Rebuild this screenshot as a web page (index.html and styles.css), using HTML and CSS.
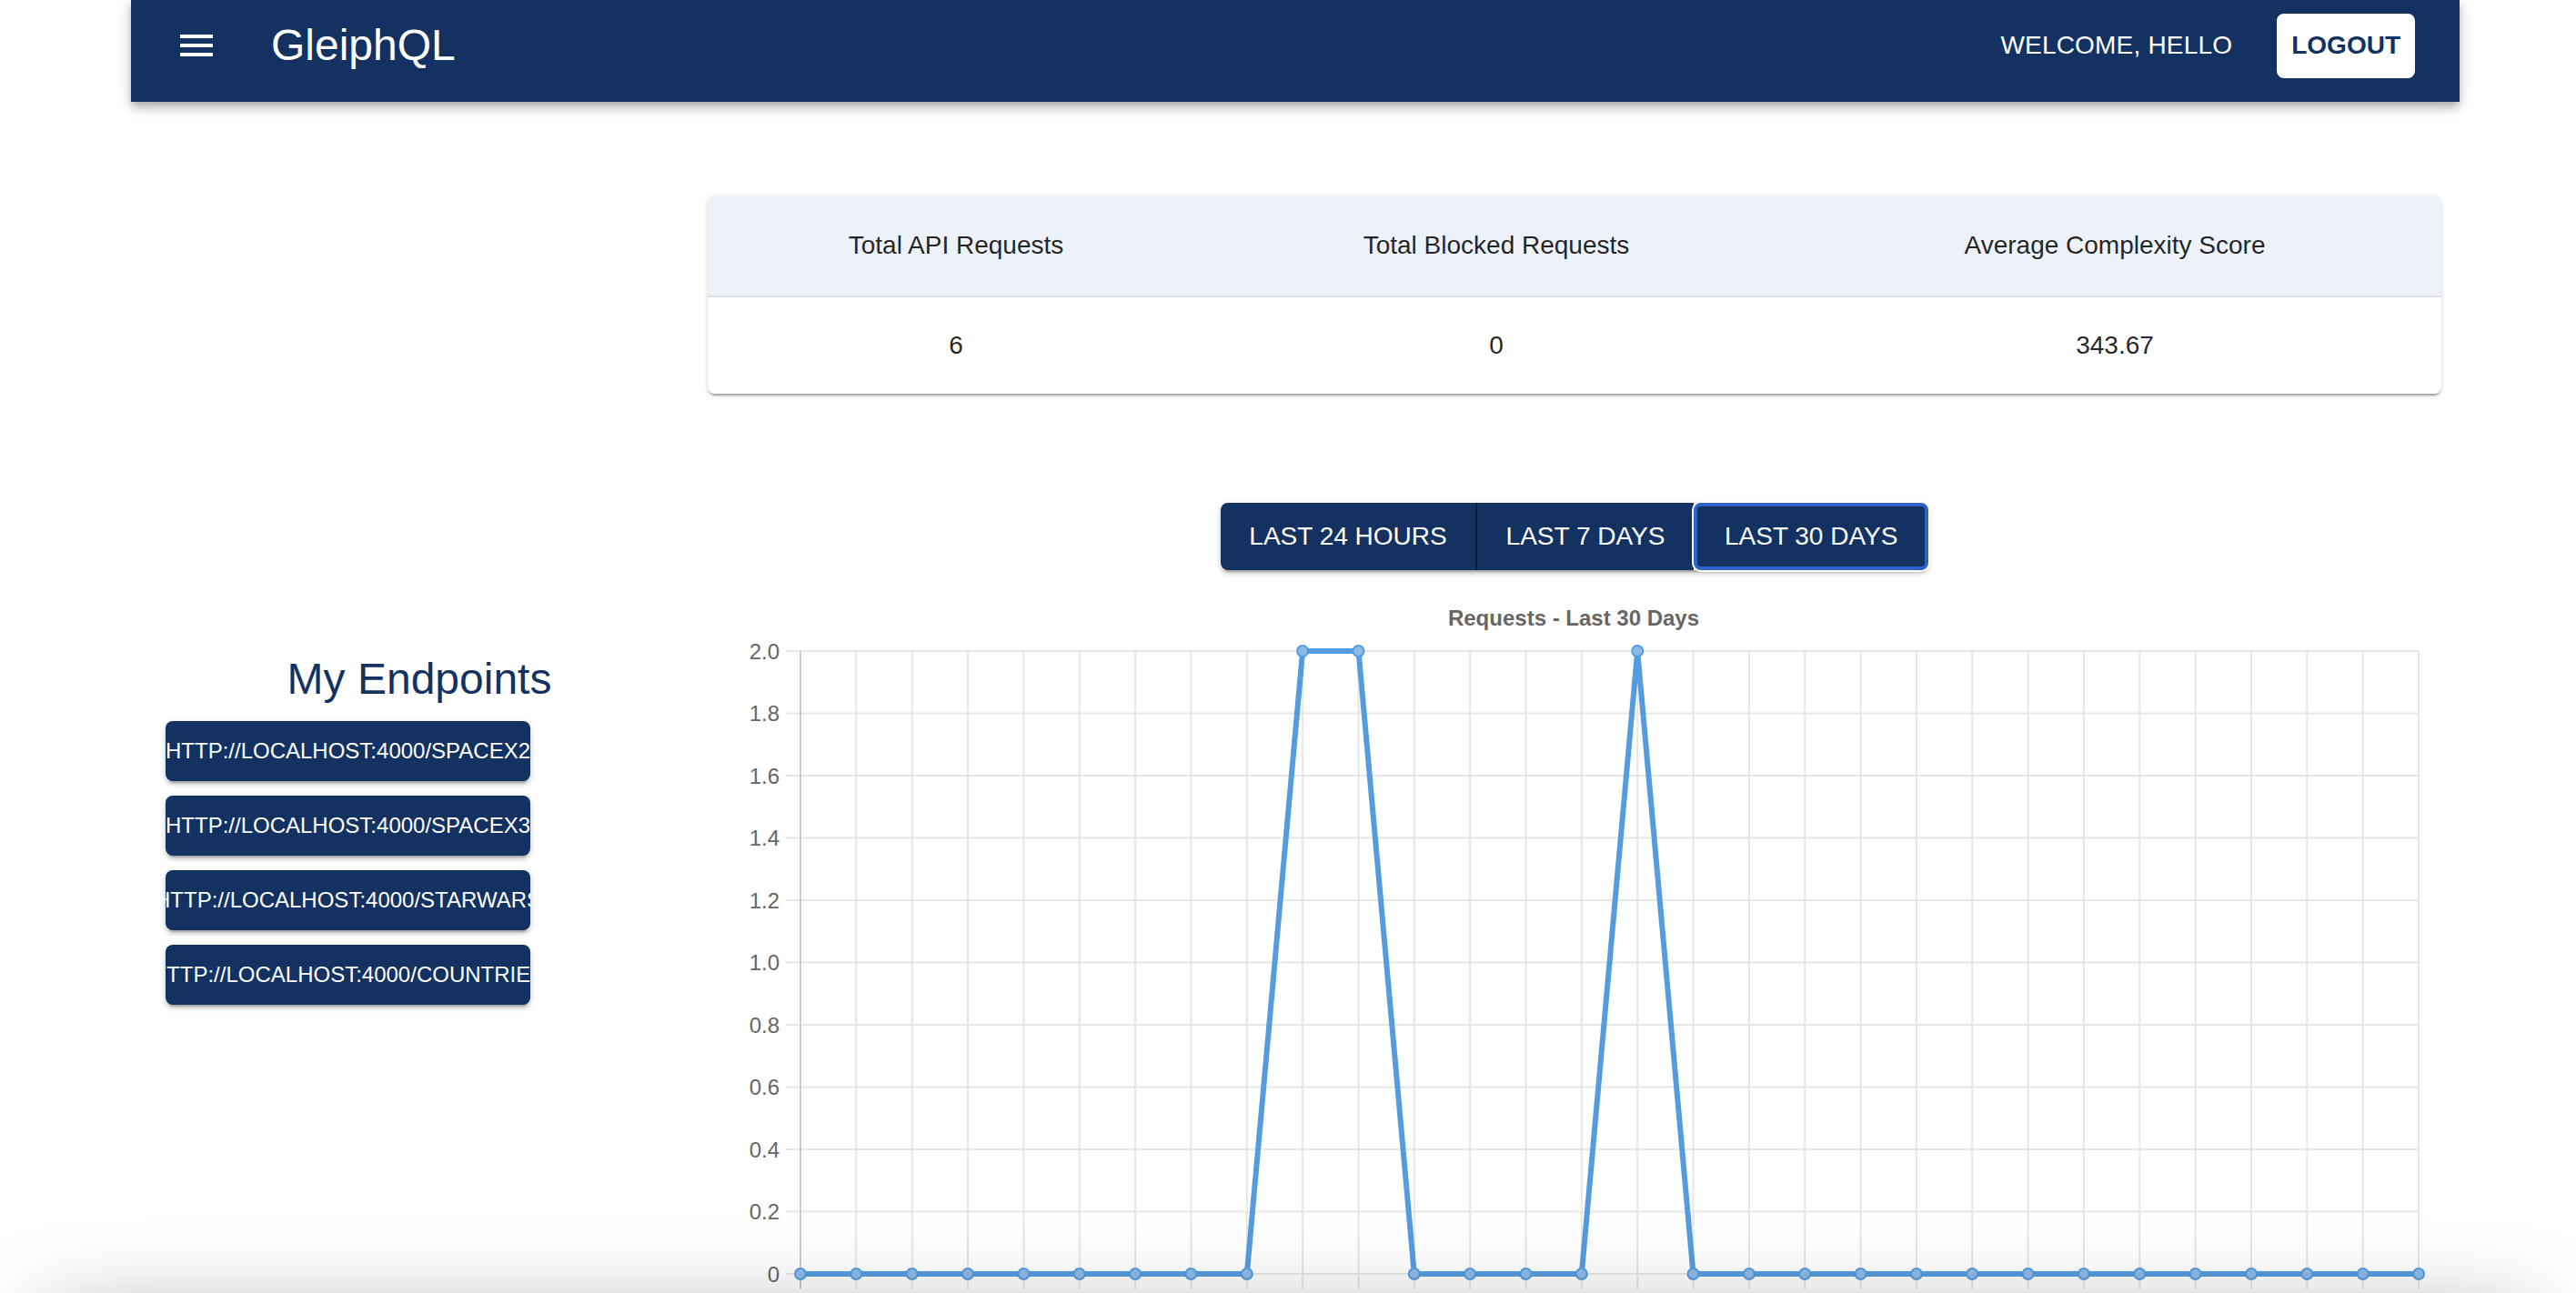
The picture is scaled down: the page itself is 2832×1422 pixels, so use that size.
FILE: index.html
```html
<!DOCTYPE html>
<html lang="en">
<head>
<meta charset="utf-8">
<title>GleiphQL</title>
<link rel="stylesheet" href="styles.css">
</head>
<body>
<div class="page">
  <header class="appbar">
    <svg class="menu-icon" width="36" height="24" viewBox="0 0 36 24" aria-hidden="true">
      <rect x="0" y="0" width="36" height="4"/>
      <rect x="0" y="10" width="36" height="4"/>
      <rect x="0" y="20" width="36" height="4"/>
    </svg>
    <div class="brand">GleiphQL</div>
    <div class="spacer"></div>
    <div class="welcome">WELCOME, HELLO</div>
    <button class="logout">LOGOUT</button>
  </header>

  <div class="main">
    <aside class="sidebar">
      <h2 class="endpoints-title">My Endpoints</h2>
      <div class="endpoint-list">
        <button class="endpoint"><span>HTTP://LOCALHOST:4000/SPACEX2</span></button>
        <button class="endpoint"><span>HTTP://LOCALHOST:4000/SPACEX3</span></button>
        <button class="endpoint"><span>HTTP://LOCALHOST:4000/STARWARS</span></button>
        <button class="endpoint"><span>HTTP://LOCALHOST:4000/COUNTRIES</span></button>
      </div>
    </aside>

    <section class="content">
      <table class="stats">
        <colgroup>
          <col class="col-a"><col class="col-b"><col class="col-c">
        </colgroup>
        <thead>
          <tr>
            <th>Total API Requests</th>
            <th>Total Blocked Requests</th>
            <th>Average Complexity Score</th>
          </tr>
        </thead>
        <tbody>
          <tr>
            <td>6</td>
            <td>0</td>
            <td>343.67</td>
          </tr>
        </tbody>
      </table>

      <div class="range-row">
        <div class="range-group">
          <button class="range-btn range-first">LAST 24 HOURS</button>
          <button class="range-btn">LAST 7 DAYS</button>
          <button class="range-btn range-selected">LAST 30 DAYS</button>
        </div>
      </div>

      <svg class="chart" width="1906" height="800" viewBox="0 0 1906 800">
        <text class="chart-title" x="952" y="38" text-anchor="middle">Requests - Last 30 Days</text>
        <g class="grid">
          <line x1="86" y1="66" x2="1881" y2="66"/>
          <line x1="86" y1="134.5" x2="1881" y2="134.5"/>
          <line x1="86" y1="203" x2="1881" y2="203"/>
          <line x1="86" y1="271.5" x2="1881" y2="271.5"/>
          <line x1="86" y1="340" x2="1881" y2="340"/>
          <line x1="86" y1="408.5" x2="1881" y2="408.5"/>
          <line x1="86" y1="477" x2="1881" y2="477"/>
          <line x1="86" y1="545.5" x2="1881" y2="545.5"/>
          <line x1="86" y1="614" x2="1881" y2="614"/>
          <line x1="86" y1="682.5" x2="1881" y2="682.5"/>
          <line x1="86" y1="751" x2="1881" y2="751"/>
          <line x1="163.3" y1="66" x2="163.3" y2="767"/>
          <line x1="224.7" y1="66" x2="224.7" y2="767"/>
          <line x1="286" y1="66" x2="286" y2="767"/>
          <line x1="347.4" y1="66" x2="347.4" y2="767"/>
          <line x1="408.7" y1="66" x2="408.7" y2="767"/>
          <line x1="470.1" y1="66" x2="470.1" y2="767"/>
          <line x1="531.4" y1="66" x2="531.4" y2="767"/>
          <line x1="592.8" y1="66" x2="592.8" y2="767"/>
          <line x1="654.1" y1="66" x2="654.1" y2="767"/>
          <line x1="715.5" y1="66" x2="715.5" y2="767"/>
          <line x1="776.8" y1="66" x2="776.8" y2="767"/>
          <line x1="838.1" y1="66" x2="838.1" y2="767"/>
          <line x1="899.5" y1="66" x2="899.5" y2="767"/>
          <line x1="960.8" y1="66" x2="960.8" y2="767"/>
          <line x1="1022.2" y1="66" x2="1022.2" y2="767"/>
          <line x1="1083.5" y1="66" x2="1083.5" y2="767"/>
          <line x1="1144.9" y1="66" x2="1144.9" y2="767"/>
          <line x1="1206.2" y1="66" x2="1206.2" y2="767"/>
          <line x1="1267.6" y1="66" x2="1267.6" y2="767"/>
          <line x1="1328.9" y1="66" x2="1328.9" y2="767"/>
          <line x1="1390.2" y1="66" x2="1390.2" y2="767"/>
          <line x1="1451.6" y1="66" x2="1451.6" y2="767"/>
          <line x1="1512.9" y1="66" x2="1512.9" y2="767"/>
          <line x1="1574.3" y1="66" x2="1574.3" y2="767"/>
          <line x1="1635.6" y1="66" x2="1635.6" y2="767"/>
          <line x1="1697" y1="66" x2="1697" y2="767"/>
          <line x1="1758.3" y1="66" x2="1758.3" y2="767"/>
          <line x1="1819.7" y1="66" x2="1819.7" y2="767"/>
          <line x1="1881" y1="66" x2="1881" y2="767"/>
        </g>
        <line class="axis" x1="102" y1="66" x2="102" y2="767"/>
        <g class="y-labels" text-anchor="end">
          <text x="79" y="74.5">2.0</text>
          <text x="79" y="143">1.8</text>
          <text x="79" y="211.5">1.6</text>
          <text x="79" y="280">1.4</text>
          <text x="79" y="348.5">1.2</text>
          <text x="79" y="417">1.0</text>
          <text x="79" y="485.5">0.8</text>
          <text x="79" y="554">0.6</text>
          <text x="79" y="622.5">0.4</text>
          <text x="79" y="691">0.2</text>
          <text x="79" y="759.5">0</text>
        </g>
        <polyline class="data-line" points="102,751 163.3,751 224.7,751 286,751 347.4,751 408.7,751 470.1,751 531.4,751 592.8,751 654.1,66 715.5,66 776.8,751 838.1,751 899.5,751 960.8,751 1022.2,66 1083.5,751 1144.9,751 1206.2,751 1267.6,751 1328.9,751 1390.2,751 1451.6,751 1512.9,751 1574.3,751 1635.6,751 1697,751 1758.3,751 1819.7,751 1881,751"/>
        <g class="points">
          <circle cx="102" cy="751" r="6"/>
          <circle cx="163.3" cy="751" r="6"/>
          <circle cx="224.7" cy="751" r="6"/>
          <circle cx="286" cy="751" r="6"/>
          <circle cx="347.4" cy="751" r="6"/>
          <circle cx="408.7" cy="751" r="6"/>
          <circle cx="470.1" cy="751" r="6"/>
          <circle cx="531.4" cy="751" r="6"/>
          <circle cx="592.8" cy="751" r="6"/>
          <circle cx="654.1" cy="66" r="6"/>
          <circle cx="715.5" cy="66" r="6"/>
          <circle cx="776.8" cy="751" r="6"/>
          <circle cx="838.1" cy="751" r="6"/>
          <circle cx="899.5" cy="751" r="6"/>
          <circle cx="960.8" cy="751" r="6"/>
          <circle cx="1022.2" cy="66" r="6"/>
          <circle cx="1083.5" cy="751" r="6"/>
          <circle cx="1144.9" cy="751" r="6"/>
          <circle cx="1206.2" cy="751" r="6"/>
          <circle cx="1267.6" cy="751" r="6"/>
          <circle cx="1328.9" cy="751" r="6"/>
          <circle cx="1390.2" cy="751" r="6"/>
          <circle cx="1451.6" cy="751" r="6"/>
          <circle cx="1512.9" cy="751" r="6"/>
          <circle cx="1574.3" cy="751" r="6"/>
          <circle cx="1635.6" cy="751" r="6"/>
          <circle cx="1697" cy="751" r="6"/>
          <circle cx="1758.3" cy="751" r="6"/>
          <circle cx="1819.7" cy="751" r="6"/>
          <circle cx="1881" cy="751" r="6"/>
        </g>
      </svg>
    </section>
  </div>
</div>
<div class="footer-shade"></div>
</body>
</html>
```

FILE: styles.css
```css
html, body {
  margin: 0;
  padding: 0;
  background: #ffffff;
}

body {
  font-family: "Liberation Sans", Arial, Helvetica, sans-serif;
  color: rgba(0, 0, 0, 0.87);
  overflow-x: hidden;
}

button {
  font-family: inherit;
  border: none;
  cursor: pointer;
}

.page {
  width: 2560px;
  margin-left: 144px;
}

/* ---------- App bar ---------- */
.appbar {
  height: 112px;
  box-sizing: border-box;
  padding: 0 49px 12px 54px;
  background: #133262;
  display: flex;
  align-items: center;
  box-shadow: 0 4px 8px -2px rgba(0, 0, 0, 0.2),
              0 8px 10px 0 rgba(0, 0, 0, 0.14),
              0 2px 20px 0 rgba(0, 0, 0, 0.12);
  position: relative;
  z-index: 2;
}

.menu-icon {
  fill: #ffffff;
  display: block;
  flex: none;
}

.brand {
  margin-left: 64px;
  color: #ffffff;
  font-size: 48px;
  line-height: 56px;
  font-weight: 400;
}

.spacer {
  flex: 1;
}

.welcome {
  color: #ffffff;
  font-size: 28px;
  line-height: 40px;
  letter-spacing: 0.2px;
  margin-right: 49px;
}

.logout {
  height: 71px;
  padding: 0 16px;
  background: #ffffff;
  color: #133262;
  font-size: 28px;
  font-weight: 700;
  border-radius: 8px;
}

/* ---------- Main layout ---------- */
.main {
  display: flex;
  align-items: flex-start;
}

.sidebar {
  width: 634px;
  flex: none;
  padding-top: 607px;
}

.endpoints-title {
  margin: 0;
  text-align: center;
  color: #133262;
  font-size: 48px;
  line-height: 56px;
  font-weight: 400;
}

.endpoint-list {
  margin: 18px 0 0 38px;
  display: flex;
  flex-direction: column;
  gap: 16px;
}

.endpoint {
  width: 401px;
  height: 66px;
  padding: 0;
  background: #133262;
  color: #ffffff;
  font-size: 24px;
  border-radius: 8px;
  overflow: hidden;
  white-space: nowrap;
  display: flex;
  align-items: center;
  justify-content: center;
  box-shadow: 0 6px 2px -4px rgba(0, 0, 0, 0.2),
              0 4px 4px 0 rgba(0, 0, 0, 0.14),
              0 2px 10px 0 rgba(0, 0, 0, 0.12);
}

.endpoint span {
  flex: none;
}

.content {
  width: 1906px;
  flex: none;
  padding-top: 103px;
}

/* ---------- Stats table ---------- */
.stats {
  width: 1906px;
  border-collapse: separate;
  border-spacing: 0;
  table-layout: fixed;
  border-radius: 8px;
  overflow: hidden;
  box-shadow: 0 4px 2px -2px rgba(0, 0, 0, 0.2),
              0 2px 2px 0 rgba(0, 0, 0, 0.14),
              0 2px 6px 0 rgba(0, 0, 0, 0.12);
  font-size: 28px;
  color: rgba(0, 0, 0, 0.87);
}

.col-a { width: 546px; }
.col-b { width: 642px; }
.col-c { width: 718px; }

.stats th {
  height: 110px;
  padding: 0;
  background: #edf2f9;
  font-weight: 400;
  text-align: center;
  border-bottom: 2px solid #e0e0e0;
}

.stats td {
  height: 106px;
  padding: 0;
  text-align: center;
  background: #ffffff;
}

/* ---------- Range toggle ---------- */
.range-row {
  margin-top: 120px;
  display: flex;
  justify-content: center;
}

.range-group {
  display: flex;
  border-radius: 8px;
  box-shadow: 0 6px 2px -4px rgba(0, 0, 0, 0.2),
              0 4px 4px 0 rgba(0, 0, 0, 0.14),
              0 2px 10px 0 rgba(0, 0, 0, 0.12);
}

.range-btn {
  height: 74px;
  box-sizing: border-box;
  padding: 0 30px;
  background: #133262;
  color: #ffffff;
  font-size: 28px;
  white-space: nowrap;
}

.range-first {
  width: 282px;
  border-radius: 8px 0 0 8px;
  border-right: 2px solid #0a1c38;
}

.range-btn:nth-child(2) {
  width: 238px;
}

.range-selected {
  width: 258px;
  border: 4px solid #2d62cb;
  border-radius: 8px;
  box-shadow: 0 0 0 2px #ffffff;
  position: relative;
}

/* ---------- Chart ---------- */
.chart {
  display: block;
  margin-top: 23px;
}

.chart-title {
  font-family: "Liberation Sans", Arial, sans-serif;
  font-size: 24px;
  font-weight: 700;
  fill: #666666;
}

.grid line {
  stroke: #e6e6e6;
  stroke-width: 2;
}

.axis {
  stroke: #cccccc;
  stroke-width: 2;
}

.y-labels text {
  font-family: "Liberation Sans", Arial, sans-serif;
  font-size: 24px;
  fill: #666666;
}

.data-line {
  fill: none;
  stroke: #559cdf;
  stroke-width: 6;
  stroke-linejoin: round;
}

.points circle {
  fill: #8dbbe8;
  stroke: #559cdf;
  stroke-width: 2;
}

/* ---------- Bottom shade (element below the fold) ---------- */
.footer-shade {
  position: relative;
  height: 200px;
  margin: 0 48px;
  background: #ffffff;
  border-radius: 8px;
  box-shadow: 0 0 100px 0 rgba(0, 0, 0, 0.35);
}
```
